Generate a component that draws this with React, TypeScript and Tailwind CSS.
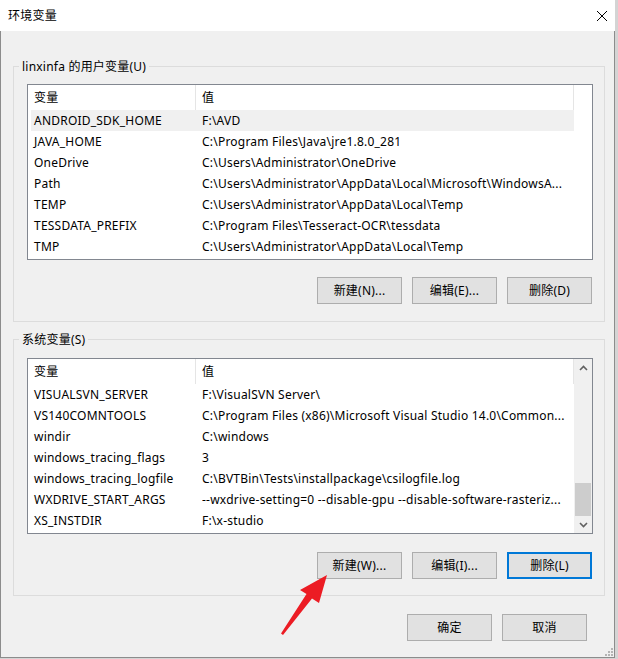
import React from "react";

type Row = [string, string];

const userVars: Row[] = [
  ["ANDROID_SDK_HOME", "F:\\AVD"],
  ["JAVA_HOME", "C:\\Program Files\\Java\\jre1.8.0_281"],
  ["OneDrive", "C:\\Users\\Administrator\\OneDrive"],
  ["Path", "C:\\Users\\Administrator\\AppData\\Local\\Microsoft\\WindowsA..."],
  ["TEMP", "C:\\Users\\Administrator\\AppData\\Local\\Temp"],
  ["TESSDATA_PREFIX", "C:\\Program Files\\Tesseract-OCR\\tessdata"],
  ["TMP", "C:\\Users\\Administrator\\AppData\\Local\\Temp"],
];

const sysVars: Row[] = [
  ["VISUALSVN_SERVER", "F:\\VisualSVN Server\\"],
  ["VS140COMNTOOLS", "C:\\Program Files (x86)\\Microsoft Visual Studio 14.0\\Common..."],
  ["windir", "C:\\windows"],
  ["windows_tracing_flags", "3"],
  ["windows_tracing_logfile", "C:\\BVTBin\\Tests\\installpackage\\csilogfile.log"],
  ["WXDRIVE_START_ARGS", "--wxdrive-setting=0 --disable-gpu --disable-software-rasteriz..."],
  ["XS_INSTDIR", "F:\\x-studio"],
];

function Button({ label, primary }: { label: string; primary?: boolean }) {
  return (
    <div
      className={
        primary
          ? "w-[85px] h-[27px] flex items-center justify-center bg-[#e1e1e1] border-2 border-[#0078d7] text-[12px] text-black"
          : "w-[85px] h-[27px] flex items-center justify-center bg-[#e1e1e1] border border-[#adadad] text-[12px] text-black"
      }
    >
      {label}
    </div>
  );
}

function Chevron({ up }: { up?: boolean }) {
  return (
    <svg width="9" height="6" viewBox="0 0 9 6">
      <path
        d={up ? "M1 5 L4.5 1.5 L8 5" : "M1 1 L4.5 4.5 L8 1"}
        fill="none"
        stroke="#606060"
        strokeWidth="1.6"
      />
    </svg>
  );
}

function VarList({ rows, selected, scroll }: { rows: Row[]; selected?: number; scroll?: boolean }) {
  return (
    <div className="ml-[13px] w-[566px] h-[176px] border border-[#828790] bg-white flex">
      <div className="flex-1 flex flex-col overflow-hidden">
        <div className="flex h-[25px] bg-white shrink-0">
          <div className="w-[168px] border-r border-[#e5e5e5] pl-[6px] flex items-center">变量</div>
          <div className="w-[378px] border-r border-[#e5e5e5] pl-[6px] flex items-center">值</div>
        </div>
        {rows.map(([k, v], i) => (
          <div
            key={k}
            className={
              i === selected
                ? "ml-[3px] w-[543px] h-[21px] flex items-center bg-[#f0f0f0] shrink-0"
                : "ml-[3px] w-[543px] h-[21px] flex items-center shrink-0"
            }
          >
            <div className="w-[171px] pl-[3px] whitespace-nowrap overflow-hidden">{k}</div>
            <div className="flex-1 whitespace-nowrap overflow-hidden">{v}</div>
          </div>
        ))}
      </div>
      {scroll && (
        <div className="w-[18px] bg-[#f0f0f0] flex flex-col">
          <div className="h-[17px] flex items-center justify-center">
            <Chevron up />
          </div>
          <div className="flex-1 flex flex-col justify-end px-[1px]">
            <div className="h-[33px] bg-[#cdcdcd]" />
          </div>
          <div className="h-[17px] flex items-center justify-center">
            <Chevron />
          </div>
        </div>
      )}
    </div>
  );
}

export default function App() {
  return (
    <div className="relative w-[618px] h-[659px] bg-[#d4d4d4] overflow-hidden text-[12px] tracking-[0.22px] text-black font-['Noto_Sans','Noto_Sans_CJK_SC',sans-serif]">
      <div className="w-[615px] h-[658px] flex flex-col">
        {/* title bar */}
        <div className="h-[31px] bg-white flex items-center justify-between pl-[8px] pr-[7px] shrink-0">
          <span className="text-[12px]">环境变量</span>
          <svg width="12" height="12" viewBox="0 0 12 12">
            <path d="M1 1 L11 11 M11 1 L1 11" stroke="#000" strokeWidth="1" />
          </svg>
        </div>

        {/* dialog body */}
        <div className="flex-1 bg-[#f0f0f0] border-x border-b border-[#8c8c8c] flex flex-col">
          <fieldset className="mt-[27px] ml-[12px] w-[592px] border border-[#dcdcdc] min-w-0">
            <legend className="ml-[5px] px-[3px] h-[17px] leading-[17px]">linxinfa 的用户变量(U)</legend>
            <div className="mt-[9px]">
              <VarList rows={userVars} selected={0} />
            </div>
            <div className="mt-[17px] mb-[17px] flex justify-end gap-[10px] pr-[12px]">
              <Button label="新建(N)..." />
              <Button label="编辑(E)..." />
              <Button label="删除(D)" />
            </div>
          </fieldset>

          <fieldset className="mt-[9px] ml-[12px] w-[592px] border border-[#dcdcdc] min-w-0">
            <legend className="ml-[5px] px-[3px] h-[17px] leading-[17px]">系统变量(S)</legend>
            <div className="mt-[10px]">
              <VarList rows={sysVars} scroll />
            </div>
            <div className="mt-[18px] mb-[16px] flex justify-end gap-[10px] pr-[12px]">
              <Button label="新建(W)..." />
              <Button label="编辑(I)..." />
              <Button label="删除(L)" primary />
            </div>
          </fieldset>

          <div className="mt-[18px] flex justify-end gap-[10px] pr-[27px]">
            <Button label="确定" />
            <Button label="取消" />
          </div>

          {/* size grip */}
          <div className="mt-auto flex justify-end pr-[1px] pb-[1px]">
            <svg width="9" height="9" viewBox="0 0 9 9">
              <rect x="7" y="1" width="2" height="2" fill="#b4b4b4" />
              <rect x="4" y="4" width="2" height="2" fill="#b4b4b4" />
              <rect x="7" y="4" width="2" height="2" fill="#b4b4b4" />
              <rect x="1" y="7" width="2" height="2" fill="#b4b4b4" />
              <rect x="4" y="7" width="2" height="2" fill="#b4b4b4" />
              <rect x="7" y="7" width="2" height="2" fill="#b4b4b4" />
            </svg>
          </div>
        </div>
      </div>

      {/* red annotation arrow */}
      <svg className="absolute left-0 top-0 pointer-events-none" width="618" height="659" viewBox="0 0 618 659">
        <polygon
          points="327,575 319,603 312,598.5 283,635 281,633.5 306.5,594 300,590"
          fill="#ec1c24"
        />
      </svg>
    </div>
  );
}
